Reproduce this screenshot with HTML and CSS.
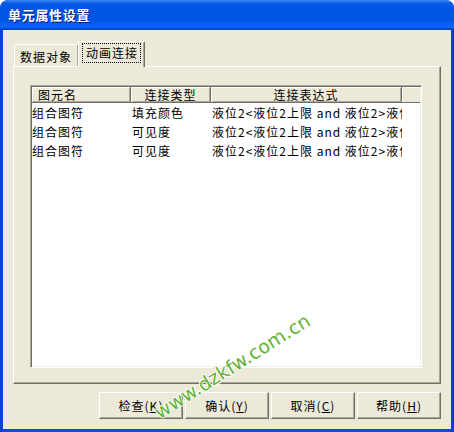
FILE: index.html
```html
<!DOCTYPE html>
<html lang="zh-CN">
<head>
<meta charset="utf-8">
<title>单元属性设置</title>
<link rel="stylesheet" href="styles.css">
</head>
<body>
<div class="window">
  <div class="titlebar"><span class="title">单元属性设置</span></div>
  <div class="client">
    <div class="tabs">
      <div class="tab">数据对象</div>
      <div class="tab active"><span class="focus">动画连接</span></div>
    </div>
    <div class="panel">
      <div class="list">
        <div class="header">
          <div class="hcell c1 left">图元名</div>
          <div class="hcell c2">连接类型</div>
          <div class="hcell c3">连接表达式</div>
          <div class="hcell c4"></div>
        </div>
        <div class="row">
          <div class="cell c1">组合图符</div>
          <div class="cell c2">填充颜色</div>
          <div class="cell c3">液位2&lt;液位2上限 and 液位2&gt;液位2下限</div>
        </div>
        <div class="row">
          <div class="cell c1">组合图符</div>
          <div class="cell c2">可见度</div>
          <div class="cell c3">液位2&lt;液位2上限 and 液位2&gt;液位2下限</div>
        </div>
        <div class="row">
          <div class="cell c1">组合图符</div>
          <div class="cell c2">可见度</div>
          <div class="cell c3">液位2&lt;液位2上限 and 液位2&gt;液位2下限</div>
        </div>
      </div>
    </div>
    <div class="buttons">
      <div class="btn">检查(<u>K</u>)</div>
      <div class="btn">确认(<u>Y</u>)</div>
      <div class="btn">取消(<u>C</u>)</div>
      <div class="btn">帮助(<u>H</u>)</div>
    </div>
  </div>
  <div class="watermark">www.dzkfw.com.cn</div>
</div>
</body>
</html>
```

FILE: styles.css
```css
* { box-sizing: border-box; }
html, body { margin: 0; padding: 0; background: #ffffff; }
body { width: 454px; height: 432px; overflow: hidden; }

.window {
  position: relative;
  width: 454px;
  height: 432px;
  background: linear-gradient(to right, #0a3ad8 0, #0a4be0 3px, #0a4be0 451px, #0532c8 454px);
  border-radius: 8px 8px 0 0;
  overflow: hidden;
  display: flex;
  flex-direction: column;
  font-family: "Noto Sans CJK SC", sans-serif;
}

.titlebar {
  height: 30px;
  flex: none;
  display: flex;
  align-items: center;
  padding-left: 8px;
  background: linear-gradient(to bottom,
    #3d8cf8 0px, #2a7af2 1px, #0a5fe6 3px, #0156e4 6px, #0054e3 12px,
    #0055e5 20px, #0a62ee 25px, #0b66f0 27px, #0748d6 29px, #0538cc 30px);
  border-radius: 8px 8px 0 0;
}

.title {
  color: #ffffff;
  font-weight: bold;
  font-size: 13px;
  letter-spacing: 0.7px;
  text-shadow: 1px 1px 0 #0a1a78;
  margin-top: -1px;
}

.client {
  flex: 1;
  margin: 0 3px 3px 3px;
  background: #ece9d8;
  padding-top: 11px;
  display: flex;
  flex-direction: column;
}

.tabs {
  height: 25px;
  display: flex;
  align-items: flex-end;
  padding-left: 11px;
  position: relative;
  z-index: 2;
}

.tab {
  height: 22px;
  width: 64px;
  font-size: 12px;
  letter-spacing: 1px;
  color: #000;
  display: flex;
  align-items: center;
  justify-content: center;
  border-top: 1px solid #ffffff;
  border-left: 1px solid #ffffff;
  border-right: 1px solid #aca899;
  border-radius: 2px 2px 0 0;
  background: #ece9d8;
  padding-top: 1px;
}

.tab.active {
  height: 26px;
  width: 67px;
  margin-bottom: -1px;
  border-right: 1px solid #716f64;
  box-shadow: inset -1px 0 0 #aca899;
  padding-top: 0;
  padding-bottom: 3px;
}

.focus {
  outline: 1px dotted #000;
  outline-offset: 0;
  padding: 1px 2px 1px 3px;
  line-height: 16px;
}

.panel {
  margin: 0 10px;
  height: 318px;
  flex: none;
  border-top: 1px solid #ffffff;
  border-left: 1px solid #ffffff;
  border-right: 1px solid #716f64;
  border-bottom: 1px solid #716f64;
  box-shadow: inset -1px -1px 0 #aca899;
  padding: 18px 0 0 16px;
}

.list {
  width: 392px;
  height: 283px;
  background: #ffffff;
  border-top: 1px solid #aca899;
  border-left: 1px solid #aca899;
  border-right: 1px solid #ffffff;
  border-bottom: 1px solid #ffffff;
  box-shadow: inset 1px 1px 0 #716f64, inset -1px -1px 0 #f1efe2;
  padding: 1px;
  font-size: 12px;
  letter-spacing: 1px;
  color: #000;
}

.header {
  display: flex;
  height: 16px;
  background: #ece9d8;
  border-bottom: 1px solid #716f64;
}

.hcell {
  height: 15px;
  line-height: 15px;
  text-align: center;
  border-right: 1px solid #716f64;
  box-shadow: inset 1px 1px 0 #ffffff, inset -1px -1px 0 #aca899;
  white-space: nowrap;
  overflow: hidden;
}
.hcell.left { text-align: left; padding-left: 6px; }
.hcell.c4 { border-right: 0; flex: 1; box-shadow: inset 1px 1px 0 #ffffff; }

.c1 { width: 99px; flex: none; }
.c2 { width: 80px; flex: none; }
.c3 { width: 191px; flex: none; }

.row {
  display: flex;
  height: 19px;
  line-height: 19px;
}

.cell {
  white-space: nowrap;
  overflow: hidden;
}
.cell.c2, .cell.c3 { padding-left: 1px; }
.row:first-of-type { margin-top: 0; }

.buttons {
  margin-top: 8px;
  display: flex;
  justify-content: flex-end;
  gap: 2px;
  padding-right: 10px;
}

.btn {
  width: 84px;
  height: 27px;
  background: #ece9d8;
  border-top: 1px solid #ffffff;
  border-left: 1px solid #ffffff;
  border-right: 1px solid #716f64;
  border-bottom: 1px solid #716f64;
  box-shadow: inset -1px -1px 0 #aca899;
  font-size: 12px;
  letter-spacing: 1px;
  display: flex;
  align-items: center;
  justify-content: center;
  color: #000;
}
.btn u { text-underline-offset: 1px; }

.watermark {
  position: absolute;
  left: 134px;
  top: 355px;
  width: 196px;
  text-align: center;
  font-family: "DejaVu Sans", sans-serif;
  font-size: 19px;
  color: #62b235;
  text-shadow: 1px 0 0 #fff, -1px 0 0 #fff, 0 1px 0 #fff, 0 -1px 0 #fff;
  transform: rotate(-32deg);
  transform-origin: center center;
  white-space: nowrap;
  z-index: 5;
}
```
